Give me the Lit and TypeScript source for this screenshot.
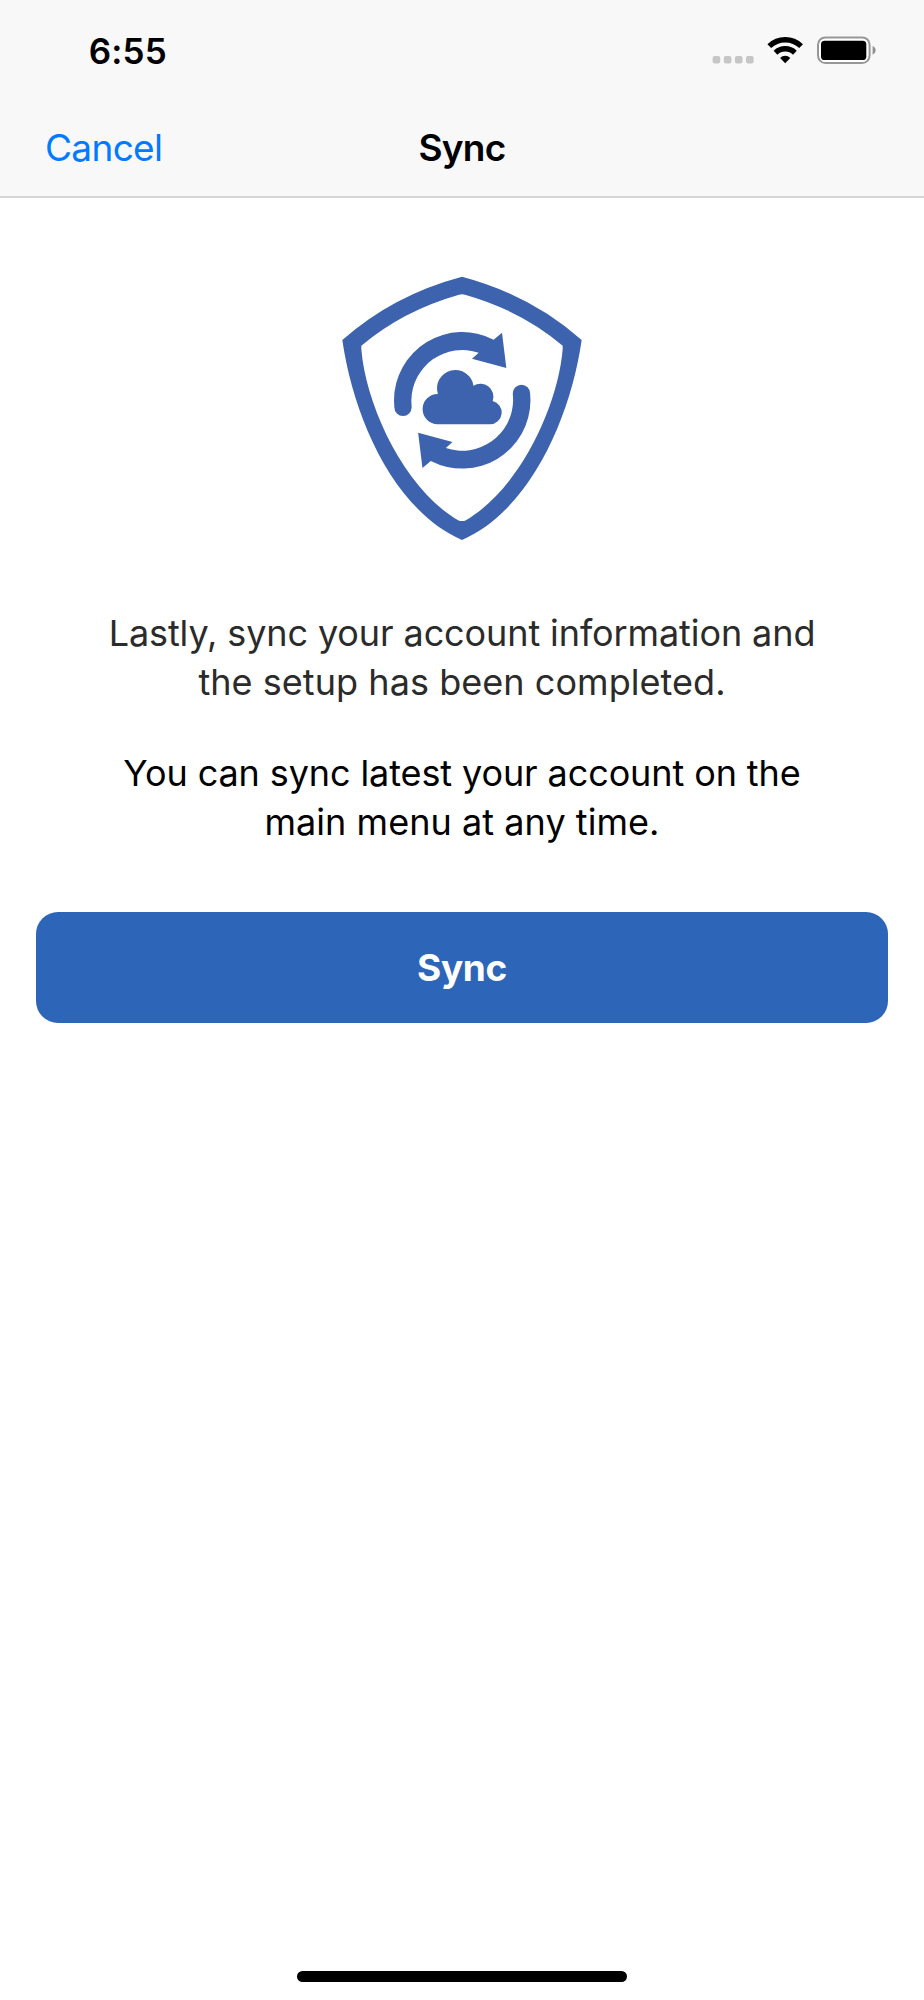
import { LitElement, html, css } from "lit";
import { customElement } from "lit/decorators.js";

@customElement("status-bar")
export class StatusBar extends LitElement {
  static styles = css`
    :host {
      display: flex;
      justify-content: space-between;
      align-items: flex-start;
      height: 98px;
      box-sizing: border-box;
      padding: 28px 47px 0 88.7px;
    }
    .time {
      margin-top: 1px;
      font-size: 35px;
      font-weight: 600;
      line-height: 44px;
      letter-spacing: 0.15px;
      color: #000;
    }
    .icons {
      display: block;
      width: 168px;
      height: 44px;
    }
  `;

  render() {
    return html`
      <span class="time">6:55</span>
      <svg class="icons" viewBox="709 28 168 44" aria-hidden="true">
        <g fill="#c6c6c6">
          <rect x="712.6" y="56" width="7.6" height="7.6" rx="2" />
          <rect x="723.8" y="56" width="7.6" height="7.6" rx="2" />
          <rect x="734.9" y="56" width="7.6" height="7.6" rx="2" />
          <rect x="746" y="56" width="7.6" height="7.6" rx="2" />
        </g>
        <g fill="none" stroke="#000" stroke-width="5.4">
          <path d="M769.3 46.1a22.9 22.9 0 0 1 31.8 0" />
          <path d="M775.5 52.7a14 14 0 0 1 19.4 0" />
        </g>
        <path d="M780.1 57.9a7.3 7.3 0 0 1 10.2 0l-5.1 5.4z" fill="#000" />
        <rect x="818" y="37.4" width="51.6" height="25.6" rx="7.4" fill="#fff" stroke="#979797" stroke-width="2" />
        <rect x="821" y="40.8" width="45.3" height="19.2" rx="3.6" fill="#000" />
        <path d="M872.6 46.1c4 1.5 4 7 0 8.6z" fill="#8f8f8f" />
      </svg>
    `;
  }
}

@customElement("nav-bar")
export class NavBar extends LitElement {
  static styles = css`
    :host {
      display: grid;
      grid-template-columns: 1fr auto 1fr;
      height: 99.5px;
      box-sizing: border-box;
      padding: 26.5px 45px 0;
      border-bottom: 2px solid #d6d6d6;
      font-size: 37px;
      line-height: 46px;
    }
    .cancel {
      justify-self: start;
      align-self: start;
      padding: 0;
      border: 0;
      background: none;
      font: inherit;
      letter-spacing: -0.67px;
      color: #007aff;
    }
    .title {
      margin: 0;
      font-size: inherit;
      font-weight: 600;
      letter-spacing: -0.8px;
      color: #000;
    }
  `;

  render() {
    return html`
      <button class="cancel">Cancel</button>
      <h1 class="title">Sync</h1>
    `;
  }
}

@customElement("sync-shield")
export class SyncShield extends LitElement {
  static styles = css`
    :host,
    svg {
      display: block;
      width: 264px;
      height: 290px;
    }
  `;

  render() {
    return html`
      <svg viewBox="0 0 792 870" fill="#3d63ae" role="img" aria-label="Sync">
        <path
          fill-rule="evenodd"
          d="M396 50Q603 105 755 240C722 470 602 750 396 840C190 750 70 470 37 240Q189 105 396 50Z
             M387 104Q218 152 94 257V268C108 440 226 692 387 782Q396 784 405 782C566 692 684 440 698 268V257Q574 152 405 104Q396 101 387 104Z"
        />
        <path
          d="M192 421A205 205 0 0 1 491 239L516 218L529 324L426 296L446 278A153 153 0 0 0 244 421L245 442A26 26 0 0 1 193 442Z"
        />
        <path
          transform="rotate(180 396.7 421)"
          d="M192 421A205 205 0 0 1 491 239L516 218L529 324L426 296L446 278A153 153 0 0 0 244 421L245 442A26 26 0 0 1 193 442Z"
        />
        <path
          d="M323 493A45.5 45.5 0 0 1 323.7 402A55 55 0 1 1 430.4 377A39 39 0 0 1 488 423A35.5 35.5 0 0 1 480 493Z"
        />
      </svg>
    `;
  }
}

@customElement("app-root")
export class AppRoot extends LitElement {
  static styles = css`
    :host {
      display: flex;
      flex-direction: column;
      height: 2000px;
      background: #fff;
      font-family: Inter, "Liberation Sans", sans-serif;
    }
    header {
      background: #f8f8f8;
    }
    main {
      flex: 1;
      display: flex;
      flex-direction: column;
      align-items: center;
      padding: 62.5px 36px 0;
    }
    .copy {
      margin: 0;
      font-size: 36px;
      line-height: 49px;
      text-align: center;
      white-space: nowrap;
    }
    .intro {
      margin-top: 59px;
      color: #2b2b2b;
    }
    .note {
      margin-top: 42px;
      color: #000;
    }
    .tight {
      letter-spacing: -0.1px;
    }
    .loose {
      letter-spacing: 0.05px;
    }
    .sync {
      align-self: stretch;
      height: 111.5px;
      margin-top: 64.5px;
      padding: 2px 0 0;
      border: 0;
      border-radius: 22px;
      background: #2d65b9;
      color: #fff;
      font: 700 37px/46px Inter, "Liberation Sans", sans-serif;
      letter-spacing: -0.38px;
    }
    footer {
      display: flex;
      justify-content: center;
      padding-bottom: 18px;
    }
    .home {
      width: 330px;
      height: 11px;
      border-radius: 6px;
      background: #000;
    }
  `;

  render() {
    return html`
      <header>
        <status-bar></status-bar>
        <nav-bar></nav-bar>
      </header>
      <main>
        <sync-shield></sync-shield>
        <p class="copy intro">
          <span class="tight">Lastly, sync your account information and</span><br />
          <span class="loose">the setup has been completed.</span>
        </p>
        <p class="copy note">
          <span class="tight">You can sync latest your account on the</span><br />
          <span class="loose">main menu at any time.</span>
        </p>
        <button class="sync">Sync</button>
      </main>
      <footer><div class="home"></div></footer>
    `;
  }
}
